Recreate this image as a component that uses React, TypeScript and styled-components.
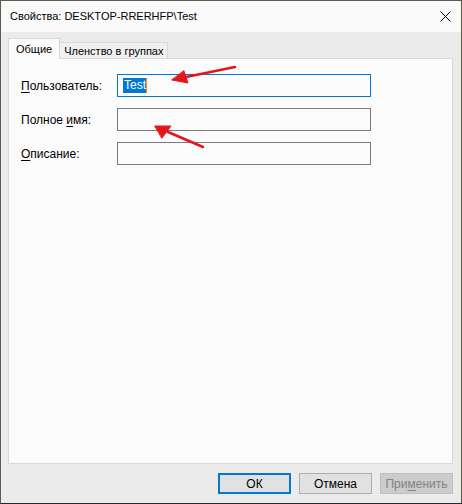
import React from 'react'
import styled, { createGlobalStyle } from 'styled-components'

const GlobalStyle = createGlobalStyle`
  html, body {
    margin: 0;
    padding: 0;
    background: #ffffff;
  }
  * {
    box-sizing: border-box;
  }
`

const Window = styled.div`
  position: relative;
  width: 462px;
  height: 504px;
  display: flex;
  flex-direction: column;
  border: 1px solid #5c5c4e;
  border-bottom-color: #1f2a33;
  font-family: 'Liberation Sans', Arial, sans-serif;
  font-size: 12px;
  color: #000000;
`

const TitleBar = styled.div`
  height: 31px;
  flex: none;
  display: flex;
  align-items: center;
  justify-content: space-between;
  padding: 0 0 1px 9px;
  background: #fafafa;
`

const Title = styled.span`
  font-size: 11px;
`

const CloseButton = styled.div`
  width: 32px;
  height: 30px;
  display: flex;
  align-items: center;
  justify-content: center;
`

const Body = styled.div`
  flex: 1;
  display: flex;
  flex-direction: column;
  background: #ebebeb;
  padding: 6px 8px 9px 7px;
`

const TabStrip = styled.div`
  display: flex;
  align-items: flex-end;
  height: 21px;
  position: relative;
  z-index: 1;
`

const Tab = styled.div<{ $active?: boolean }>`
  height: ${({ $active }) => ($active ? '21px' : '17px')};
  padding: ${({ $active }) => ($active ? '3px 7px 0 7px' : '1px 4px 0 4px')};
  border: 1px solid #d9d9d9;
  border-bottom: ${({ $active }) => ($active ? 'none' : '1px solid #d9d9d9')};
  border-left: ${({ $active }) => ($active ? '1px solid #d9d9d9' : 'none')};
  background: ${({ $active }) => ($active ? '#fbfbfb' : '#f0f0f0')};
  font-size: 11px;
  line-height: 14px;
  white-space: nowrap;
`

const Panel = styled.div`
  flex: 1;
  margin-top: -1px;
  border: 1px solid #d9d9d9;
  background: #fbfbfb;
  padding: 15px 0 0 12px;
  display: flex;
  flex-direction: column;
  gap: 11px;
`

const FieldRow = styled.div`
  display: flex;
  align-items: center;
  height: 23px;
`

const Label = styled.div`
  width: 96px;
  flex: none;
`

const Key = styled.span`
  text-decoration: underline;
  text-underline-offset: 2px;
`

const Input = styled.div<{ $focused?: boolean }>`
  width: 254px;
  height: 23px;
  border: 1px solid ${({ $focused }) => ($focused ? '#0078d7' : '#7a7a7a')};
  background: #fbfbfb;
  display: flex;
  align-items: center;
  padding-left: 5px;
`

const Selection = styled.span`
  background: #0078d7;
  color: #ffffff;
  line-height: 15px;
  padding: 0 0 0 1px;
  border-right: 1px solid #ff8c1a;
`

const ButtonRow = styled.div`
  display: flex;
  justify-content: flex-end;
  gap: 8px;
  margin-top: 9px;
`

const Button = styled.div<{ $default?: boolean; $disabled?: boolean }>`
  width: 73px;
  height: 21px;
  display: flex;
  align-items: center;
  justify-content: center;
  background: ${({ $disabled }) => ($disabled ? '#cccccc' : '#e1e1e1')};
  border: ${({ $default, $disabled }) =>
    $default ? '2px solid #0078d7' : $disabled ? '1px solid #bfbfbf' : '1px solid #adadad'};
  color: ${({ $disabled }) => ($disabled ? '#838383' : '#000000')};
`

const Overlay = styled.svg`
  position: absolute;
  left: -1px;
  top: -1px;
  pointer-events: none;
`

const App = () => {
  return (
    <>
      <GlobalStyle />
      <Window>
        <TitleBar>
          <Title>Свойства: DESKTOP-RRERHFP\Test</Title>
          <CloseButton>
            <svg width="11" height="11" viewBox="0 0 11 11">
              <path d="M0.5 0.5 L10.5 10.5 M10.5 0.5 L0.5 10.5" stroke="#000" strokeWidth="1" />
            </svg>
          </CloseButton>
        </TitleBar>
        <Body>
          <TabStrip>
            <Tab $active>Общие</Tab>
            <Tab>Членство в группах</Tab>
          </TabStrip>
          <Panel>
            <FieldRow>
              <Label>
                <Key>П</Key>ользователь:
              </Label>
              <Input $focused>
                <Selection>Test</Selection>
              </Input>
            </FieldRow>
            <FieldRow>
              <Label>
                Полное <Key>и</Key>мя:
              </Label>
              <Input />
            </FieldRow>
            <FieldRow>
              <Label>
                <Key>О</Key>писание:
              </Label>
              <Input />
            </FieldRow>
          </Panel>
          <ButtonRow>
            <Button $default>ОК</Button>
            <Button>Отмена</Button>
            <Button $disabled>
              При<Key>м</Key>енить
            </Button>
          </ButtonRow>
        </Body>
        <Overlay width="462" height="504" viewBox="0 0 462 504">
          <g fill="#e8141b" stroke="#e8141b" strokeLinecap="round">
            <line x1="235" y1="67" x2="186" y2="77" strokeWidth="2.5" />
            <polygon points="172,80 188,83 184,71" strokeWidth="1" />
            <line x1="203" y1="147" x2="168" y2="132" strokeWidth="2.5" />
            <polygon points="155,126 171,126 162,138" strokeWidth="1" />
          </g>
        </Overlay>
      </Window>
    </>
  )
}

export default App
